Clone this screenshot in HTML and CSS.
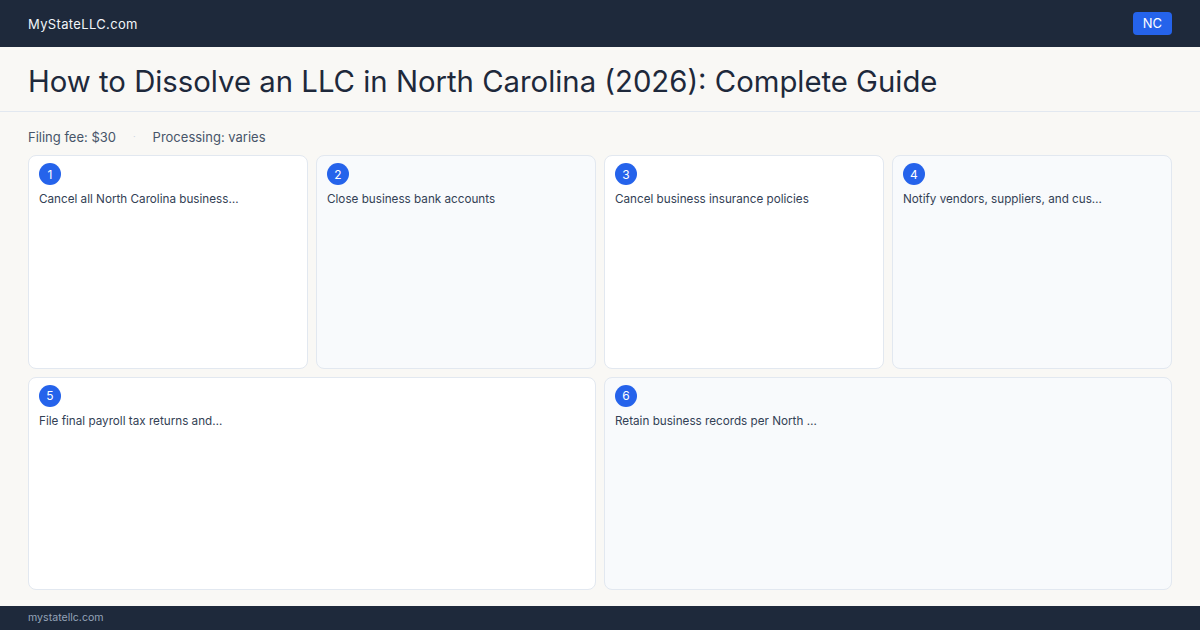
FILE: index.html
```html
<!DOCTYPE html>
<html lang="en">
<head>
<meta charset="utf-8">
<title>How to Dissolve an LLC in North Carolina (2026)</title>
<link rel="stylesheet" href="styles.css">
</head>
<body>
<div class="page">
  <header class="topbar">
    <div class="logo">MyStateLLC.com</div>
    <div class="state-badge">NC</div>
  </header>
  <section class="title-band">
    <h1 class="title">How to Dissolve an LLC in North Carolina (2026): Complete Guide</h1>
  </section>
  <main class="content">
    <div class="meta">
      <span class="meta-item">Filing fee: $30</span>
      <span class="meta-sep">·</span>
      <span class="meta-item">Processing: varies</span>
    </div>
    <div class="steps">
      <div class="step step-light"><span class="num">1</span><p class="step-text">Cancel all North Carolina business…</p></div>
      <div class="step step-tint"><span class="num">2</span><p class="step-text">Close business bank accounts</p></div>
      <div class="step step-light"><span class="num">3</span><p class="step-text">Cancel business insurance policies</p></div>
      <div class="step step-tint"><span class="num">4</span><p class="step-text">Notify vendors, suppliers, and cus…</p></div>
      <div class="step step-light step-wide"><span class="num">5</span><p class="step-text">File final payroll tax returns and…</p></div>
      <div class="step step-tint step-wide"><span class="num">6</span><p class="step-text">Retain business records per North …</p></div>
    </div>
  </main>
  <footer class="footer">mystatellc.com</footer>
</div>
</body>
</html>
```

FILE: styles.css
```css
* { box-sizing: border-box; }
html, body { margin: 0; padding: 0; }
body {
  width: 1200px;
  height: 630px;
  overflow: hidden;
  font-family: Inter, "Noto Sans", "Liberation Sans", sans-serif;
  background: #f9f8f5;
  color: #1e293b;
}
.page {
  display: flex;
  flex-direction: column;
  height: 630px;
}
.topbar {
  height: 47px;
  background: #1e293b;
  display: flex;
  align-items: center;
  justify-content: space-between;
  padding: 0 28px;
}
.logo {
  color: #f1f5f9;
  font-size: 13px;
  letter-spacing: 0.35px;
}
.state-badge {
  background: #2563eb;
  color: #ffffff;
  font-size: 13px;
  line-height: 23px;
  padding: 0 10px;
  border-radius: 4px;
}
.title-band {
  border-bottom: 1px solid #e2e8f0;
  padding: 19px 28px 13px;
}
.title {
  margin: 0;
  font-weight: 400;
  font-size: 29.3px;
  line-height: 32px;
  color: #1e293b;
}
.content {
  flex: 1;
  display: flex;
  flex-direction: column;
  padding: 16px 28px 16px;
  gap: 9px;
}
.meta {
  display: flex;
  align-items: center;
  gap: 17px;
  font-size: 13px;
  line-height: 18px;
  color: #475569;
}
.meta-sep { color: #cbd5e1; font-size: 9px; }
.steps {
  flex: 1;
  display: grid;
  grid-template-columns: repeat(4, 1fr);
  grid-template-rows: 1fr 1fr;
  gap: 8px;
}
.step {
  border: 1px solid #e2e8f0;
  border-radius: 8px;
  padding: 7px 10px;
}
.step-light { background: #ffffff; }
.step-tint { background: #f8fafc; }
.step-wide { grid-column: span 2; }
.num {
  display: flex;
  align-items: center;
  justify-content: center;
  width: 22px;
  height: 22px;
  border-radius: 50%;
  background: #2563eb;
  color: #ffffff;
  font-size: 12px;
}
.step-text {
  margin: 6px 0 0;
  font-size: 11.7px;
  line-height: 16px;
  color: #334155;
}
.footer {
  height: 24px;
  background: #1e293b;
  color: #94a3b8;
  font-size: 10.6px;
  line-height: 24px;
  padding: 0 28px;
}
```
